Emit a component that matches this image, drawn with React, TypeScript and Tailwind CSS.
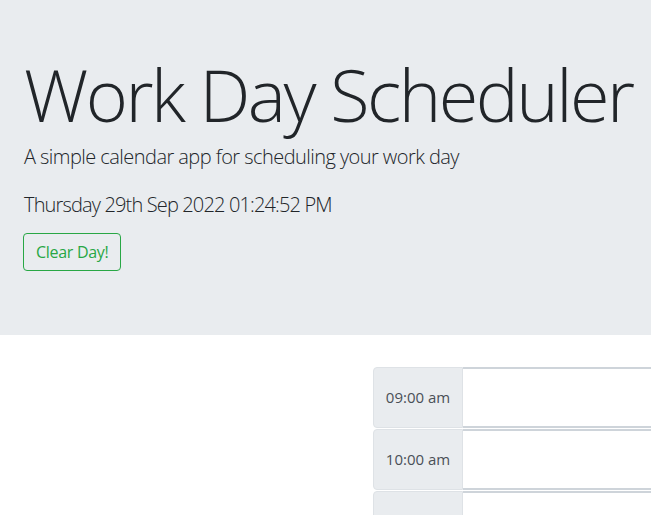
import React from 'react';

const hours = ['09:00 am', '10:00 am', '11:00 am'];

const App: React.FC = () => {
    return (
        <div className="h-screen bg-white text-[#212529] overflow-hidden" style={{ fontFamily: '"Open Sans", "Liberation Sans", sans-serif' }}>
            {/* Jumbotron header */}
            <header className="bg-[#e9ecef] h-[335px] px-[24px] pt-[51px]">
                <h1 className="text-[72px] font-light leading-[1.2] tracking-[-2.5px] whitespace-nowrap">Work Day Scheduler</h1>
                <p className="text-[20px] font-light leading-[1.5] mt-[5px] tracking-[-0.55px]">A simple calendar app for scheduling your work day</p>
                <p className="text-[20px] font-light leading-[1.5] mt-[18px] tracking-[-0.85px]">Thursday 29th Sep 2022 01:24:52 PM</p>
                <button className="mt-[13px] h-[38px] px-[12px] text-[16px] tracking-[-0.3px] text-[#28a745] border border-[#28a745] rounded-[4px] -ml-[1px]">Clear Day!</button>
            </header>

            {/* Time blocks */}
            <main className="mt-[32px] pl-[373px] flex flex-col gap-[1px]">
                {hours.map((h) => (
                    <div key={h} className="flex h-[61px] w-[400px]">
                        <div className="w-[90px] shrink-0 flex items-center justify-center bg-[#e9ecef] border border-[#dee2e6] rounded-l-[4px] text-[15px] text-[#495057]">
                            {h}
                        </div>
                        <div className="flex-1 bg-white border-y-2 border-[#ced4da]" />
                    </div>
                ))}
            </main>
        </div>
    );
};

export default App;
